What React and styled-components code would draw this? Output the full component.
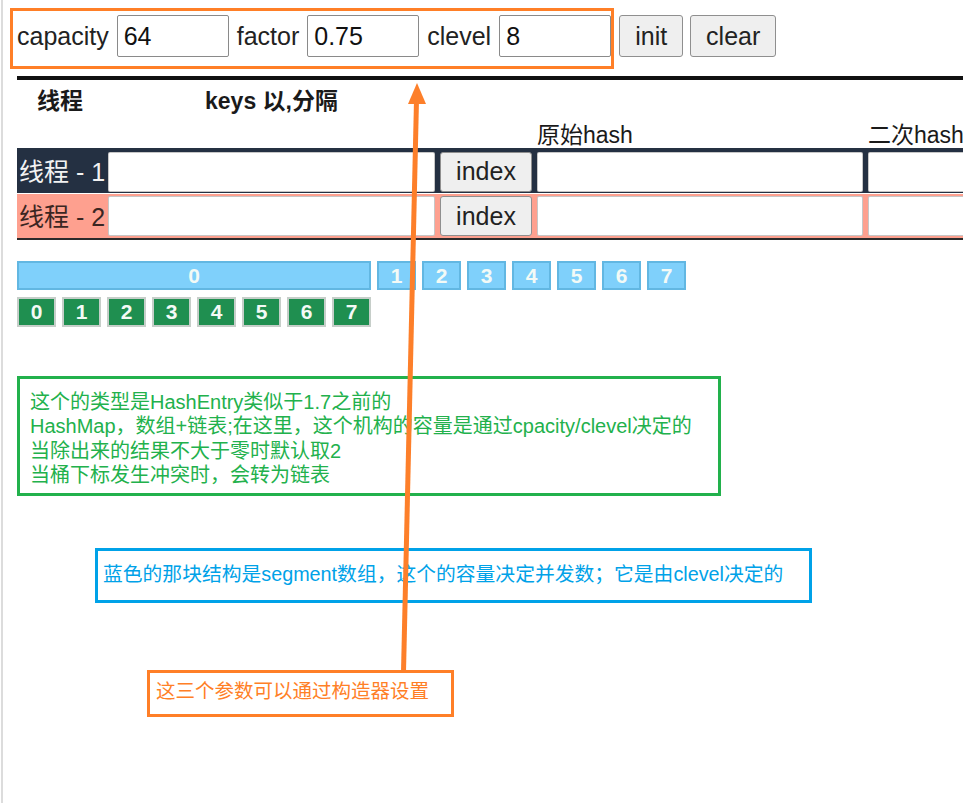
import React from "react";
import styled, { createGlobalStyle } from "styled-components";

const GlobalStyle = createGlobalStyle`
  html, body {
    margin: 0;
    padding: 0;
    background: #fff;
    overflow: hidden;
  }
  body {
    font-family: "Liberation Sans", "Noto Sans CJK SC", sans-serif;
    color: #111;
  }
`;

const Frame = styled.div`
  position: relative;
  width: 963px;
  height: 803px;
  overflow: hidden;
`;

const Page = styled.div`
  box-sizing: border-box;
  width: 962px;
  height: 803px;
  margin-left: 1px;
  border-left: 2px solid #dcdcdc;
  padding: 8px 0 0 14px;
`;

// toolbar
const Toolbar = styled.div`
  display: flex;
  align-items: flex-start;
  gap: 5px;
  margin-left: -7px;
`;
const ParamBox = styled.div`
  display: flex;
  align-items: center;
  gap: 8px;
  border: 3px solid #ff7f27;
  padding: 4px 0 9px 4px;
`;
const Label = styled.span`
  font-size: 25px;
  color: #222;
`;
const ParamInput = styled.input`
  box-sizing: border-box;
  width: 112px;
  height: 42px;
  border: 1px solid #8a8a8a;
  border-radius: 2px;
  padding: 0 6px;
  font: 25px "Liberation Sans", sans-serif;
  color: #111;
`;
const Button = styled.button`
  box-sizing: border-box;
  width: ${(p) => p.$w}px;
  height: ${(p) => p.$h || 42}px;
  margin-top: ${(p) => (p.$top ? 7 : 0)}px;
  margin-left: ${(p) => p.$ml || 0}px;
  background: #efefef;
  border: 1px solid #8f8f8f;
  border-radius: 3px;
  font: 25px "Liberation Sans", sans-serif;
  color: #222;
  padding: 0;
`;

const Divider = styled.div`
  height: 4px;
  margin-top: 7px;
  background: #111;
`;

// table
const cols = "86px 327px 92px 326px 326px";

const Header = styled.div`
  display: grid;
  grid-template-columns: ${cols};
  grid-template-rows: 38px 30px;
  column-gap: 5px;
  font-size: 23px;
`;
const HeadCell = styled.div`
  grid-column: ${(p) => p.$col};
  grid-row: ${(p) => p.$row};
  display: flex;
  align-items: center;
  justify-content: ${(p) => (p.$bold ? "center" : "flex-start")};
  font-weight: ${(p) => (p.$bold ? 700 : 400)};
  white-space: nowrap;
  color: #1a1a1a;
`;

const Table = styled.div`
  border-top: 2px solid #253142;
  border-bottom: 2px solid #2b2b2b;
`;
const Row = styled.div`
  display: grid;
  grid-template-columns: ${cols};
  column-gap: 5px;
  align-items: center;
  height: ${(p) => p.$h}px;
  background: ${(p) => p.$bg};
  margin-top: ${(p) => p.$gap || 0}px;
`;
const RowLabel = styled.div`
  font-size: 25px;
  padding: 0 0 3px 2px;
  color: ${(p) => p.$color};
  white-space: nowrap;
`;
const CellInput = styled.input`
  box-sizing: border-box;
  width: 100%;
  height: 40px;
  border: 1px solid rgba(0, 0, 0, 0.22);
  border-radius: 2px;
  background: #fff;
`;

// segments
const Cells = styled.div`
  display: flex;
  gap: 6px;
  margin-top: ${(p) => p.$top}px;
`;
const Cell = styled.div`
  box-sizing: border-box;
  width: ${(p) => 39 * p.$span + 6 * (p.$span - 1)}px;
  height: ${(p) => p.$h}px;
  display: flex;
  align-items: center;
  justify-content: center;
  background: ${(p) => p.$bg};
  border: 2px solid ${(p) => p.$border};
  color: #f3faf6;
  font-weight: 700;
  font-size: 21px;
`;

// annotations
const Note = styled.div`
  box-sizing: border-box;
  width: ${(p) => p.$w}px;
  height: ${(p) => p.$h}px;
  margin: ${(p) => p.$top}px 0 0 ${(p) => p.$left}px;
  border: 3px solid ${(p) => p.$color};
  color: ${(p) => p.$color};
  padding: ${(p) => p.$pad};
  font-family: "Liberation Sans", "Noto Sans CJK SC", sans-serif;
  font-size: ${(p) => p.$fs || 20}px;
  line-height: 24.3px;
  display: flex;
  flex-direction: column;
  justify-content: ${(p) => (p.$center ? "center" : "flex-start")};
  white-space: nowrap;
`;

const ArrowLayer = styled.svg`
  position: absolute;
  left: 0;
  top: 0;
  pointer-events: none;
`;

const greenLines = [
  "这个的类型是HashEntry类似于1.7之前的",
  "HashMap，数组+链表;在这里，这个机构的容量是通过cpacity/clevel决定的",
  "当除出来的结果不大于零时默认取2",
  "当桶下标发生冲突时，会转为链表",
];

const threads = [
  { name: "线程 - 1", bg: "#243042", color: "#f2f2f2", h: 43 },
  { name: "线程 - 2", bg: "#fea08f", color: "#3b2622", h: 44, gap: 1 },
];

export default function App() {
  return (
    <Frame>
      <GlobalStyle />
      <Page>
        <Toolbar>
          <ParamBox>
            <Label>capacity</Label>
            <ParamInput defaultValue="64" />
            <Label>factor</Label>
            <ParamInput defaultValue="0.75" />
            <Label>clevel</Label>
            <ParamInput defaultValue="8" />
          </ParamBox>
          <Button $w={64} $top>init</Button>
          <Button $w={86} $top $ml={2}>clear</Button>
        </Toolbar>
        <Divider />

        <Header>
          <HeadCell $col={1} $row={1} $bold>线程</HeadCell>
          <HeadCell $col={2} $row={1} $bold>keys 以,分隔</HeadCell>
          <HeadCell $col={4} $row={2}>原始hash</HeadCell>
          <HeadCell $col={5} $row={2}>二次hash</HeadCell>
        </Header>

        <Table>
          {threads.map((t) => (
            <Row key={t.name} $bg={t.bg} $h={t.h} $gap={t.gap}>
              <RowLabel $color={t.color}>{t.name}</RowLabel>
              <CellInput />
              <Button $w={92} $h={40}>index</Button>
              <CellInput />
              <CellInput />
            </Row>
          ))}
        </Table>

        <Cells $top={21}>
          <Cell $span={8} $h={29} $bg="#7fd0fb" $border="#62b7e2">0</Cell>
          {[1, 2, 3, 4, 5, 6, 7].map((n) => (
            <Cell key={n} $span={1} $h={29} $bg="#7fd0fb" $border="#62b7e2">{n}</Cell>
          ))}
        </Cells>
        <Cells $top={7}>
          {[0, 1, 2, 3, 4, 5, 6, 7].map((n) => (
            <Cell key={n} $span={1} $h={30} $bg="#1f8f50" $border="#c6cec9">{n}</Cell>
          ))}
        </Cells>

        <Note $w={704} $h={120} $top={49} $left={0} $color="#22b14c" $pad="11px 10px 6px">
          {greenLines.map((l) => (
            <div key={l}>{l}</div>
          ))}
        </Note>
        <Note $w={717} $h={55} $top={52} $left={78} $color="#00a2e8" $pad="0 5px 2px" $fs={19.8} $center>
          蓝色的那块结构是segment数组，这个的容量决定并发数；它是由clevel决定的
        </Note>
        <Note $w={307} $h={47} $top={67} $left={130} $color="#ff7f27" $pad="0 6px 4px" $fs={19.5} $center>
          这三个参数可以通过构造器设置
        </Note>
      </Page>

      <ArrowLayer width="963" height="803" viewBox="0 0 963 803">
        <line x1="403.5" y1="672" x2="416.5" y2="100" stroke="#fd7f2a" strokeWidth="5" />
        <polygon points="417,83 408,104 426,104" fill="#fd7f2a" />
      </ArrowLayer>
    </Frame>
  );
}
